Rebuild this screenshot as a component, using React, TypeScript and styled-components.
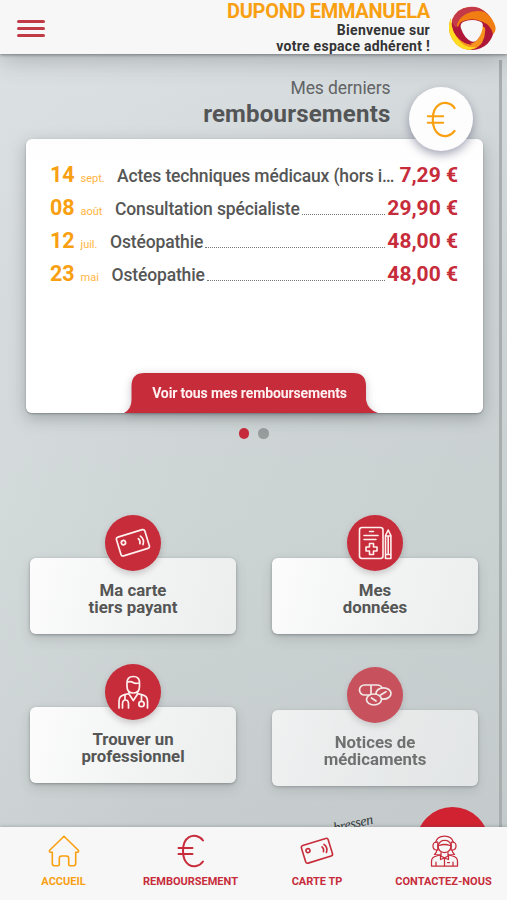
import React from "react";
import styled, { createGlobalStyle, css } from "styled-components";

const red = "#c72c3b";
const orange = "#f8a012";
const ink = "#555655";

const GlobalStyle = createGlobalStyle`
  * { box-sizing: border-box; }
  body { margin: 0; font-family: Roboto, "Liberation Sans", sans-serif; }
`;

const Screen = styled.div`
  width: 507px;
  height: 900px;
  display: flex;
  flex-direction: column;
  overflow: hidden;
  background: #cdd3d4;
`;

const Header = styled.header`
  flex: 0 0 54px;
  display: flex;
  align-items: flex-start;
  padding: 0 10px 0 17px;
  background: #f7f7f7;
  box-shadow: 0 1px 3px rgba(60, 64, 68, 0.55), 0 5px 26px rgba(60, 64, 68, 0.32);
  z-index: 2;
`;

const MenuButton = styled.button`
  border: 0;
  padding: 0;
  margin-top: 20px;
  width: 28px;
  height: 17px;
  display: flex;
  flex-direction: column;
  justify-content: space-between;
  background: none;
`;

const MenuLine = styled.span`
  height: 2.6px;
  border-radius: 2px;
  background: #c13b47;
`;

const Greeting = styled.div`
  flex: 1;
  text-align: right;
  white-space: nowrap;
  font-weight: 700;
  font-size: 14px;
  line-height: 16px;
  color: #343434;
`;

const Member = styled.div`
  font-size: 20px;
  line-height: 22px;
  padding-top: 0.4px;
  margin-bottom: -0.4px;
  letter-spacing: -0.3px;
  color: ${orange};
`;

const Welcome = styled.div`
  letter-spacing: 0.28px;
`;

const LogoSlot = styled.div`
  margin: 5px 0 0 19px;
  width: 48px;
  height: 48px;
`;

const Main = styled.main`
  flex: 1;
  min-height: 0;
  position: relative;
  overflow: hidden;
  background: linear-gradient(100deg, rgba(225, 231, 232, 0.4), rgba(200, 206, 207, 0) 45%, rgba(185, 192, 193, 0.2)),
    linear-gradient(#d8dddf, #d0d5d7 30%, #cdd4d4 60%, #c7cdce);
`;

const ScrollThumb = styled.div`
  position: absolute;
  top: 6px;
  right: 5px;
  bottom: 0;
  width: 3px;
  background: #a8adae;
`;

const SectionTitle = styled.h2`
  margin: 0 116.5px 0 0;
  padding-top: 24px;
  height: 85px;
  text-align: right;
  font-size: 17.5px;
  line-height: 21px;
  font-weight: 400;
  letter-spacing: -0.1px;
  color: #626465;
`;

const TitleStrong = styled.strong`
  display: block;
  font-size: 24px;
  line-height: 30px;
  letter-spacing: 0.2px;
  font-weight: 700;
  color: #535556;
`;

const Card = styled.section`
  position: relative;
  margin: 0 24.5px 0 25.5px;
  height: 273.5px;
  padding: 19px 24.5px 0;
  background: linear-gradient(#fdfdfd, #fff 25px);
  border-radius: 6px;
  box-shadow: 0 1px 2px rgba(70, 75, 80, 0.45), 0 5px 16px rgba(70, 75, 80, 0.35);
`;

const EuroBadge = styled.div`
  position: absolute;
  top: -52px;
  right: 9.5px;
  width: 64px;
  height: 64px;
  border-radius: 50%;
  display: grid;
  place-items: center;
  background: #fdfdfd;
  box-shadow: 0 4px 10px rgba(65, 65, 100, 0.45);
`;

const Row = styled.div`
  height: 33px;
  display: flex;
  align-items: baseline;
  line-height: 33px;
  white-space: nowrap;
`;

const Day = styled.span`
  width: 25px;
  font-size: 21.5px;
  font-weight: 700;
  color: ${orange};
`;

const Month = styled.span<{ $width: number }>`
  width: ${(p) => p.$width}px;
  margin-left: 5.5px;
  font-size: 11px;
  color: #ffb440;
`;

const Act = styled.span`
  font-size: 17.5px;
  font-weight: 500;
  letter-spacing: -0.15px;
  color: ${ink};
`;

const Leader = styled.span<{ $blank?: boolean }>`
  flex: 1;
  margin: 0 2px;
  border-bottom: 1px dotted ${(p) => (p.$blank ? "transparent" : "#777")};
`;

const Amount = styled.span`
  font-size: 21px;
  font-weight: 700;
  color: ${red};
`;

const AllButton = styled.button`
  position: absolute;
  left: 98px;
  bottom: 0;
  width: 254px;
  height: 40px;
  padding: 0;
  border: 0;
  background: none;
  filter: drop-shadow(0 2px 4px rgba(60, 60, 80, 0.3));
`;

const TabShape = styled.svg`
  display: block;
`;

const TabLabel = styled.span`
  position: absolute;
  inset: 0 2px 0 0;
  text-align: center;
  font: 700 14px/41px Roboto, sans-serif;
  letter-spacing: -0.12px;
  color: #fff0f1;
`;

const Dots = styled.div`
  display: flex;
  justify-content: center;
  gap: 9px;
  padding-top: 15.5px;
  height: 91.5px;
`;

const Dot = styled.i<{ $on?: boolean }>`
  width: 10.5px;
  height: 10.5px;
  border-radius: 50%;
  background: ${(p) => (p.$on ? red : "#979c9d")};
`;

const Tiles = styled.div`
  display: grid;
  grid-template-columns: 206px 206px;
  column-gap: 36px;
  row-gap: 73px;
  padding: 54px 0 0 30px;
`;

const Tile = styled.a<{ $muted?: boolean }>`
  height: 76px;
  display: flex;
  flex-direction: column;
  align-items: center;
  border-radius: 6px;
  background: linear-gradient(105deg, #fcfcfc, #f2f3f3 55%, #eceeee);
  box-shadow: 0 1px 3px rgba(70, 75, 80, 0.45), 0 5px 12px rgba(70, 75, 80, 0.18);
  text-align: center;
  font-size: 16.8px;
  line-height: 17.5px;
  font-weight: 700;
  color: ${ink};
  ${(p) =>
    p.$muted &&
    css`
      margin-top: 3px;
      margin-bottom: -3px;
      opacity: 0.77;
    `}
`;

const TileIcon = styled.span`
  flex: 0 0 56px;
  width: 56px;
  margin: -43px 0 10.5px;
  border-radius: 50%;
  display: grid;
  place-items: center;
  background: ${red};
  box-shadow: 0 3px 6px rgba(70, 60, 65, 0.25);
`;

const Helper = styled.div`
  position: absolute;
  right: 18px;
  bottom: -53px;
  width: 73px;
  height: 73px;
  border-radius: 50%;
  background: #d12232;
`;

const HandNote = styled.span`
  position: absolute;
  left: 333px;
  bottom: -4px;
  font: italic 14px/15px "Liberation Serif", serif;
  letter-spacing: -0.3px;
  color: #303637;
  transform: rotate(-13deg);
`;

const Nav = styled.nav`
  flex: 0 0 73.5px;
  display: grid;
  grid-template-columns: 127px 127px 126px 127px;
  background: #f7f7f7;
  box-shadow: 0 -1px 3px rgba(70, 75, 80, 0.25);
  z-index: 2;
`;

const NavItem = styled.a<{ $active?: boolean }>`
  display: flex;
  flex-direction: column;
  align-items: center;
  padding: 7.5px 0 0;
  gap: 6px;
  font-size: 11px;
  line-height: 16px;
  font-weight: 700;
  white-space: nowrap;
  color: ${(p) => (p.$active ? orange : red)};
`;

const Icon = styled.svg`
  display: block;
  fill: none;
  stroke: currentColor;
  stroke-linecap: round;
  stroke-linejoin: round;
`;

const WhiteIcon = styled(Icon)`
  color: #fff0ee;
`;

const EuroSvg = styled(Icon)<{ $color: string }>`
  color: ${(p) => p.$color};
`;

const EuroIcon = ({ size, color }: { size: number; color: string }) => (
  <EuroSvg $color={color} width={size} height={size} viewBox="0 0 34 34" strokeWidth="2">
    <path d="M29 6.500C25.500 1.300 19 .8 15 3.200 10.300 6 9 11 9 17s1.300 11 6 13.800c4 2.400 10.500 1.900 14-3.300M4.500 14h14M4.500 20h14" />
  </EuroSvg>
);

const CardGlyph = () => (
  <g transform="rotate(-17 17 17)">
    <rect x="3" y="7.500" width="28" height="18.500" rx="2" />
    <circle cx="8.5" cy="14" r="2" />
    <path d="M23 14.5q1.600 2.500 0 5M25.600 12.800q3 4.200 0 8.400" />
  </g>
);

const HomeIcon = () => (
  <Icon width="34" height="34" viewBox="0 0 34 34" strokeWidth="1.6">
    <path d="M17 2.3 2.7 16.2q-1 1.7 1 2.1h1.6v11.3q0 2.2 2 2.2H11q1.3 0 1.3-1.5v-6q0-2.3 2.2-2.3h5q2.2 0 2.2 2.3v6q0 1.5 1.3 1.5h3.7q2 0 2-2.2V18.3h1.6q2-.4 1-2.1z" />
  </Icon>
);

const AgentIcon = () => (
  <Icon width="34" height="34" viewBox="0 0 34 34" strokeWidth="1.25">
    <path d="M8.500 8.500Q10 2 17.500 2T26.500 8.500M11 11q3-5 6.500-4.500Q22 6 24 11M11 11q0 7.500 6.500 7.500T24 11M12 11.500q5.500-2 11 0" />
    <path d="M9 8q-3 .5-3 4t3 4h1.800V8zm17 0q3 .5 3 4t-3 4h-1.800V8zM10 16q-.5 3-2.500 4.500L13 21M25 16q.5 3 2.500 4.500L22 21" />
    <path d="M4.500 32v-4.500q0-4.500 5-5.500l3.500-1M30.500 32v-4.500q0-4.500-5-5.500L22 21M4.500 32h26M9 32v-4M26 32v-4M14 18.500V22l3.500 2 3.500-2v-3.500M13.500 21.500v4l4-1.500 4 1.500v-4M17.500 25v7M20.500 28.500h2" />
  </Icon>
);

const DataIcon = () => (
  <WhiteIcon width="34" height="34" viewBox="0 0 34 34" strokeWidth="1.6">
    <rect x="1.5" y="1.5" width="23.5" height="31" rx="2.5" />
    <path d="M11.5 5.5h4M6 9.5h14M6 13.5h12" />
    <path d="M11.5 17.5h4v3.5H19v4h-3.5v3.5h-4V25H8v-4h3.5zM27.5 9.5 30.2 4l2.7 5.5v23h-5.4zM27.5 10h5.4M27.5 28.5h5.4M30.2 10v18" />
  </WhiteIcon>
);

const DoctorIcon = () => (
  <WhiteIcon width="34" height="34" viewBox="0 0 34 34" strokeWidth="1.7">
    <path d="M11 8q0-6.5 6.3-6.5T23.5 8v3.5q0 6.5-6.2 6.5T11 11.500zM12 7q3-1 5 .5t6 .5" />
    <path d="M3 33v-7q0-5 5-6.200l5-1.300v-2M31.500 33v-7q0-5-5-6.200l-5-1.300v-2M13 19l4.300 6.500 4.300-6.500" />
    <path d="M9 19.500V25M6.500 33v-4q0-4 3-4t3 4v4M25.500 20v6" />
    <circle cx="25.500" cy="29" r="2.700" />
  </WhiteIcon>
);

const PillsIcon = () => (
  <WhiteIcon width="34" height="34" viewBox="0 0 34 34" strokeWidth="1.700">
    <path d="M18 17H6.500a5 5 0 0 1 0-10H19q4 0 5 3M13 7v10" />
    <ellipse cx="25.500" cy="15.500" rx="7.500" ry="5.700" />
    <ellipse cx="16" cy="21.500" rx="7.500" ry="5.500" fill={red} />
    <path d="m22.500 17 5.500-3.300M13.500 20l4.500 3" />
  </WhiteIcon>
);

const Logo = () => (
  <svg width="48" height="48" viewBox="0 0 48 48">
    <ellipse cx="23.300" cy="23.700" rx="21.500" ry="21.200" fill="#ae1738" />
    <path d="M2 13C-2 22 0 32 7 39q6 6 14 5.700 8-1 12-7 4-7 3-15l-5-3Q34 30 27 36q-7 6-15-.5Q1 27 2 13z" fill="#f7941d" />
    <path d="M2 13C-2 22 0 32 7 39q6 6 14 5.700 4-.5 6-2.700-9 1.500-15-4.500Q2 28 2 13z" fill="#ffdc22" />
    <path d="M7 13Q2 25 10 34q6 5 13 6-7-5-10-13-2-6 0-13z" fill="#ae1738" />
    <path d="M3 15Q8 3 20 2q11-1 17 6 7 5 9.500 14 .5 5-2.500 7-2-9-11-12.500Q22 12 12 17q-2 2-3 5-4-3-6-7z" fill="#f07e12" />
    <path d="M3 15Q8 3 20 2q10-1 16 5-10-3-19 2Q8 14 7.500 23 3.500 20 3 15z" fill="#c53a48" />
    <path d="M14 17q8-3.500 17-.5 3 1 2.800 4-.3 8-5.300 14-2.500 3.200-6 2-7-3-10.500-13-1.500-4.500 2-6.500z" fill="#f7f7f7" />
  </svg>
);

const acts = [
  { day: "14", month: "sept.", width: 36.5, label: "Actes techniques médicaux (hors i…", amount: "7,29 €", clipped: true },
  { day: "08", month: "août", width: 34.5, label: "Consultation spécialiste", amount: "29,90 €" },
  { day: "12", month: "juil.", width: 29.5, label: "Ostéopathie", amount: "48,00 €" },
  { day: "23", month: "mai", width: 31, label: "Ostéopathie", amount: "48,00 €" },
];

export default function App() {
  return (
    <>
      <GlobalStyle />
      <Screen>
        <Header>
          <MenuButton aria-label="Menu">
            <MenuLine />
            <MenuLine />
            <MenuLine />
          </MenuButton>
          <Greeting>
            <Member>DUPOND EMMANUELA</Member>
            <Welcome>Bienvenue sur</Welcome>
            <Welcome>votre espace adhérent !</Welcome>
          </Greeting>
          <LogoSlot>
            <Logo />
          </LogoSlot>
        </Header>

        <Main>
          <SectionTitle>
            Mes derniers
            <TitleStrong>remboursements</TitleStrong>
          </SectionTitle>
          <Card>
            <EuroBadge>
              <EuroIcon size={37} color={orange} />
            </EuroBadge>
            {acts.map((a) => (
              <Row key={a.day}>
                <Day>{a.day}</Day>
                <Month $width={a.width}>{a.month}</Month>
                <Act>{a.label}</Act>
                <Leader $blank={a.clipped} />
                <Amount>{a.amount}</Amount>
              </Row>
            ))}
            <AllButton>
              <TabShape width="254" height="40" viewBox="0 0 254 40">
                <path d="M0 40Q7.500 36 7.500 27V13Q7.500 0 20.500 0H229Q242 0 242 13V27Q244 37 254 40Z" fill={red} />
              </TabShape>
              <TabLabel>Voir tous mes remboursements</TabLabel>
            </AllButton>
          </Card>
          <Dots>
            <Dot $on />
            <Dot />
          </Dots>
          <Tiles>
            <Tile>
              <TileIcon>
                <WhiteIcon width="36" height="36" viewBox="0 0 34 34" strokeWidth="1.6">
                  <CardGlyph />
                </WhiteIcon>
              </TileIcon>
              Ma carte
              <br />
              tiers payant
            </Tile>
            <Tile>
              <TileIcon>
                <DataIcon />
              </TileIcon>
              Mes
              <br />
              données
            </Tile>
            <Tile>
              <TileIcon>
                <DoctorIcon />
              </TileIcon>
              Trouver un
              <br />
              professionnel
            </Tile>
            <Tile $muted>
              <TileIcon>
                <PillsIcon />
              </TileIcon>
              Notices de
              <br />
              médicaments
            </Tile>
          </Tiles>
          <HandNote>bressen</HandNote>
          <Helper />
          <ScrollThumb />
        </Main>

        <Nav>
          <NavItem $active>
            <HomeIcon />
            ACCUEIL
          </NavItem>
          <NavItem>
            <EuroIcon size={34} color={red} />
            REMBOURSEMENT
          </NavItem>
          <NavItem>
            <Icon width="34" height="34" viewBox="0 0 34 34" strokeWidth="1.6">
              <CardGlyph />
            </Icon>
            CARTE TP
          </NavItem>
          <NavItem>
            <AgentIcon />
            CONTACTEZ-NOUS
          </NavItem>
        </Nav>
      </Screen>
    </>
  );
}
